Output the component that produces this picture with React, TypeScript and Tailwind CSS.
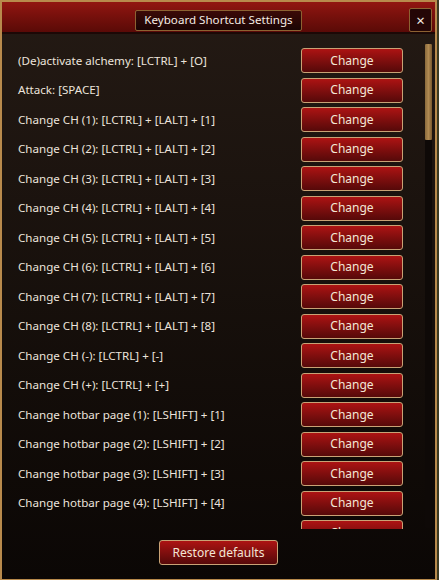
import React from 'react';

const shortcuts: string[] = [
  '(De)activate alchemy: [LCTRL] + [O]',
  'Attack: [SPACE]',
  'Change CH (1): [LCTRL] + [LALT] + [1]',
  'Change CH (2): [LCTRL] + [LALT] + [2]',
  'Change CH (3): [LCTRL] + [LALT] + [3]',
  'Change CH (4): [LCTRL] + [LALT] + [4]',
  'Change CH (5): [LCTRL] + [LALT] + [5]',
  'Change CH (6): [LCTRL] + [LALT] + [6]',
  'Change CH (7): [LCTRL] + [LALT] + [7]',
  'Change CH (8): [LCTRL] + [LALT] + [8]',
  'Change CH (-): [LCTRL] + [-]',
  'Change CH (+): [LCTRL] + [+]',
  'Change hotbar page (1): [LSHIFT] + [1]',
  'Change hotbar page (2): [LSHIFT] + [2]',
  'Change hotbar page (3): [LSHIFT] + [3]',
  'Change hotbar page (4): [LSHIFT] + [4]',
  'Use emotion (8): [LCTRL] + [1]',
];

const font = { fontFamily: '"Noto Sans", "DejaVu Sans", sans-serif' };

function RedButton({ label, className = '' }: { label: string; className?: string }) {
  return (
    <button
      className={`h-[25px] rounded-[3px] border border-[#c9a275] bg-gradient-to-b from-[#ad1313] to-[#560909] text-[12px] text-[#f3e6d6] ${className}`}
    >
      {label}
    </button>
  );
}

export default function App() {
  return (
    <div className="w-[439px] h-[580px] bg-[#3b3a22] overflow-hidden" style={font}>
      <div className="w-[437px] h-[580px] flex flex-col border-x-2 border-t-2 border-b border-[#b88a4c] bg-gradient-to-b from-[#241a14] to-[#0b0705]">
        {/* Title bar */}
        <div className="relative h-[32px] shrink-0 flex items-center justify-center bg-gradient-to-b from-[#921611] to-[#5a0a07] border-b-2 border-[#1c0806]">
          <div className="h-[21px] px-[8px] flex items-center rounded-[2px] border border-[#8c6232] bg-gradient-to-b from-[#3c0a07] to-[#1a0404] text-[11.6px] text-[#f4ece4] mt-[6px]">
            Keyboard Shortcut Settings
          </div>
          <div className="absolute right-[3px] top-[6px] w-[23px] h-[24px] flex items-center justify-center rounded-[2px] border border-[#8c6232] bg-[#240606] text-[15px] leading-none text-[#f4ece4]">
            ×
          </div>
        </div>

        {/* List */}
        <div className="flex h-[495px] shrink-0 pt-[10px]">
          <div className="flex-1 overflow-hidden pl-[16px] pt-[4px]">
            <div className="flex flex-col gap-[4.5px] w-[385px]">
              {shortcuts.map((s) => (
                <div key={s} className="flex items-center justify-between h-[25px]">
                  <span className="text-[11.6px] text-[#ece4dc] whitespace-nowrap">{s}</span>
                  <RedButton label="Change" className="w-[102px]" />
                </div>
              ))}
            </div>
          </div>
          <div className="w-[7px] mr-[3px] ml-[22px] h-[484px] bg-[#0e0907] rounded-[1px] flex flex-col">
            <div className="h-[96px] rounded-[1px] bg-gradient-to-r from-[#8a6a3c] via-[#b08a52] to-[#7a5a30]" />
          </div>
        </div>

        {/* Footer */}
        <div className="flex-1 flex justify-center pt-[11px]">
          <RedButton label="Restore defaults" className="w-[119px] h-[25px]" />
        </div>
      </div>
    </div>
  );
}
